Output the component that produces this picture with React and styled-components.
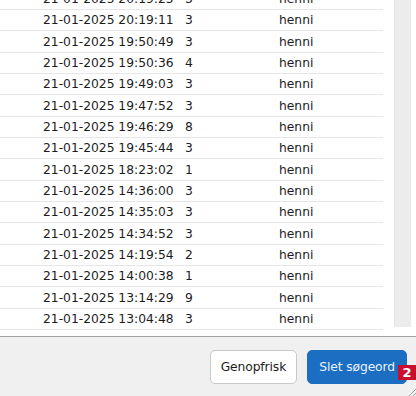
import React from 'react';
import styled, { createGlobalStyle } from 'styled-components';

const GlobalStyle = createGlobalStyle`
    html, body {
        margin: 0;
        padding: 0;
        background: #ffffff;
    }
    body {
        font-family: "DejaVu Sans", Verdana, sans-serif;
        color: #1c1c1c;
    }
`

const Window = styled.div`
    display: flex;
    flex-direction: column;
    width: 416px;
    height: 396px;
    overflow: hidden;
    position: relative;
`

const ListArea = styled.div`
    flex: 1;
    display: flex;
    min-height: 0;
    background: #ffffff;
    padding-right: 5px;
`

const Table = styled.div`
    width: 383px;
    display: flex;
    flex-direction: column;
    justify-content: flex-end;
    overflow: hidden;
    padding-bottom: 6px;
`

const Row = styled.div`
    display: grid;
    grid-template-columns: 142px 94px 1fr;
    align-items: center;
    flex: 0 0 21.33px;
    box-sizing: border-box;
    padding-left: 43px;
    border-bottom: 1px solid #e6e6e6;
    font-size: 12.3px;
    line-height: 20px;
    white-space: nowrap;
`

const Cell = styled.span`
    overflow: hidden;
`

const Track = styled.div`
    width: 17px;
    margin-left: 11px;
    margin-bottom: 9px;
    background: #ececec;
    border-left: 1px solid #e4e4e4;
    box-sizing: border-box;
`

const Footer = styled.div`
    flex: 0 0 59px;
    display: flex;
    align-items: center;
    justify-content: flex-end;
    gap: 10px;
    padding-right: 9px;
    background: #f0f0f0;
    border-top: 1px solid #a3a3a3;
`

const Button = styled.button`
    position: relative;
    height: 34px;
    padding: 0 ${p => (p.primary ? '11px' : '10px')};
    border-radius: 5px;
    font-family: "DejaVu Sans", Verdana, sans-serif;
    font-size: 12.3px;
    letter-spacing: -0.1px;
    cursor: pointer;
    border: 1px solid ${p => (p.primary ? '#1b6ec2' : '#c9c9c9')};
    background: ${p => (p.primary ? '#1b6ec2' : '#ffffff')};
    color: ${p => (p.primary ? '#e9f1fb' : '#1c1c1c')};
`

const Badge = styled.span`
    position: absolute;
    right: -10px;
    top: 14px;
    width: 18px;
    height: 15px;
    background: #c8102e;
    color: #ffffff;
    font-weight: bold;
    font-size: 13px;
    line-height: 15px;
    text-align: center;
    letter-spacing: 0;
`

const Grip = styled.svg`
    position: absolute;
    right: 0;
    bottom: 0;
`

const rows = [
    ['21-01-2025 20:19:25', '3', 'henni'],
    ['21-01-2025 20:19:11', '3', 'henni'],
    ['21-01-2025 19:50:49', '3', 'henni'],
    ['21-01-2025 19:50:36', '4', 'henni'],
    ['21-01-2025 19:49:03', '3', 'henni'],
    ['21-01-2025 19:47:52', '3', 'henni'],
    ['21-01-2025 19:46:29', '8', 'henni'],
    ['21-01-2025 19:45:44', '3', 'henni'],
    ['21-01-2025 18:23:02', '1', 'henni'],
    ['21-01-2025 14:36:00', '3', 'henni'],
    ['21-01-2025 14:35:03', '3', 'henni'],
    ['21-01-2025 14:34:52', '3', 'henni'],
    ['21-01-2025 14:19:54', '2', 'henni'],
    ['21-01-2025 14:00:38', '1', 'henni'],
    ['21-01-2025 13:14:29', '9', 'henni'],
    ['21-01-2025 13:04:48', '3', 'henni'],
]

export default function App() {
    return (
        <Window>
            <GlobalStyle />
            <ListArea>
                <Table>
                    {rows.map((r, i) => (
                        <Row key={i}>
                            <Cell>{r[0]}</Cell>
                            <Cell>{r[1]}</Cell>
                            <Cell>{r[2]}</Cell>
                        </Row>
                    ))}
                </Table>
                <Track />
            </ListArea>
            <Footer>
                <Button>Genopfrisk</Button>
                <Button primary>
                    Slet søgeord
                    <Badge>2</Badge>
                </Button>
            </Footer>
            <Grip width="8" height="8" viewBox="0 0 8 8">
                <path d="M8 1 L1 8 M8 5 L5 8" stroke="#a0a0a0" strokeWidth="1" />
            </Grip>
        </Window>
    );
}
